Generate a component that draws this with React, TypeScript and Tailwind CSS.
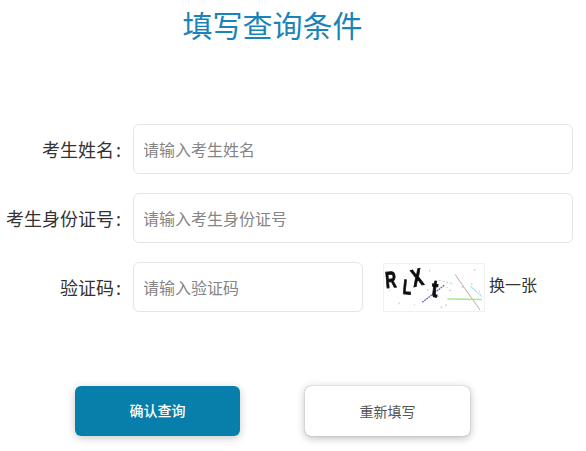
const font = { fontFamily: '"Noto Sans CJK SC", "Liberation Sans", sans-serif' };

function Captcha() {
  return (
    <svg width="102" height="49" viewBox="0 0 102 49" className="block border border-[#f0f0f0] shrink-0">
      <defs>
        <filter id="soft"><feGaussianBlur stdDeviation="0.35" /></filter>
      </defs>
      <rect width="102" height="49" fill="#fff" />
      <g filter="url(#soft)">
        <line x1="38.7" y1="40" x2="62" y2="22" stroke="#6a5fd0" strokeWidth="1.3" strokeDasharray="2 0.7" />
        <line x1="73" y1="11" x2="99" y2="48" stroke="#bda79a" strokeWidth="1" />
        <line x1="65" y1="36.5" x2="101" y2="37" stroke="#a6e88a" strokeWidth="1.5" />
        <line x1="89" y1="23" x2="101" y2="34" stroke="#8fe3ee" strokeWidth="1.2" strokeDasharray="2 0.6" />
        <line x1="56" y1="17" x2="72" y2="21" stroke="#bcdcc0" strokeWidth="1.2" strokeDasharray="2 2" />
        <g fill="#111" stroke="#111" strokeWidth="1" fontFamily="Liberation Sans, sans-serif" fontWeight="700" fontSize="24">
          <text transform="translate(1 25) rotate(-5) scale(0.66 1)">R</text>
          <text transform="translate(18 31) rotate(5) scale(0.62 0.9)">L</text>
          <text transform="translate(30 24) rotate(-14) scale(0.72 1.05)">X</text>
          <text transform="translate(48 34) rotate(6) scale(0.8 1.05)">t</text>
        </g>
        <g fill="#c9b8d8">
          <rect x="46" y="6" width="1" height="2" /><rect x="93" y="5" width="1" height="2" />
          <rect x="90" y="20" width="1" height="2" /><rect x="64" y="24" width="1" height="1" />
          <rect x="14" y="40" width="1" height="2" /><rect x="58" y="44" width="1" height="2" />
          <rect x="63" y="42" width="1" height="2" /><rect x="80" y="23" width="1" height="2" />
          <rect x="98" y="28" width="1" height="1" /><rect x="30" y="42" width="1" height="1" />
          <rect x="44" y="26" width="1" height="2" /><rect x="67" y="27" width="2" height="1" />
          <rect x="4" y="27" width="1" height="1" /><rect x="55" y="33" width="1" height="2" />
        </g>
      </g>
    </svg>
  );
}

function Row({ label, placeholder, short }: { label: string; placeholder: string; short?: boolean }) {
  return (
    <div className="flex items-center h-[50px]">
      <label className="w-[123px] shrink-0 pt-[1px] text-right text-[18px] leading-[49px] text-[#333] whitespace-nowrap">
        {label}
        <span className="ml-[2px] mr-[2px]">:</span>
      </label>
      <input
        placeholder={placeholder}
        className={`ml-[10px] h-[50px] ${short ? "w-[230px]" : "w-[440px]"} shrink-0 rounded-md border border-[#e5e5e5] bg-white px-[10px] -indent-[1px] text-[16px] text-[#333] outline-none placeholder:text-[#858585]`}
      />
      {short && (
        <div className="flex items-center ml-[20px]">
          <Captcha />
          <span className="ml-[4px] mb-[6px] text-[16px] text-[#333] whitespace-nowrap">换一张</span>
        </div>
      )}
    </div>
  );
}

export default function App() {
  return (
    <div className="w-[586px] h-[451px] bg-white overflow-hidden" style={font}>
      <h1 className="w-[545px] text-center text-[30px] leading-[48px] font-normal text-[#1a84b8]">填写查询条件</h1>
      <div className="mt-[76px] flex flex-col gap-[19px]">
        <Row label="考生姓名" placeholder="请输入考生姓名" />
        <Row label="考生身份证号" placeholder="请输入考生身份证号" />
        <Row label="验证码" placeholder="请输入验证码" short />
      </div>
      <div className="mt-[74px] ml-[75px] flex gap-[65px]">
        <button className="w-[165px] h-[50px] pb-[1px] rounded-md bg-[#077faa] text-white text-[14px] font-medium shadow-[0_2px_8px_rgba(0,0,0,0.22)]">确认查询</button>
        <button className="w-[165px] h-[50px] rounded-md bg-white text-[#555] text-[14px] shadow-[0_0_1px_rgba(0,0,0,0.45),0_2px_9px_rgba(0,0,0,0.28)]">重新填写</button>
      </div>
    </div>
  );
}
